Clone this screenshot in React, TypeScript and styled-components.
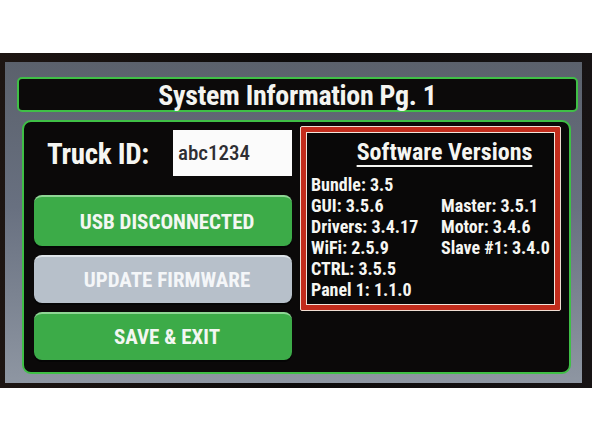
import React from "react";
import styled, { createGlobalStyle } from "styled-components";

const Global = createGlobalStyle`
  html, body { margin: 0; padding: 0; background: #ffffff; }
  body { font-family: "Roboto Condensed", "Roboto", sans-serif; }
`;

const Page = styled.div`
  width: 592px;
  height: 444px;
  padding-top: 53px;
  box-sizing: border-box;
  background: #ffffff;
`;

const Frame = styled.div`
  height: 335px;
  box-sizing: border-box;
  padding: 9px 10px 5px 5px;
  background: linear-gradient(90deg, #1d1512 0%, #0c0a0a 50%, #171314 100%);
  display: flex;
`;

const Bezel = styled.div`
  flex: 1;
  display: flex;
  flex-direction: column;
  padding: 15px 4px 9px 12px;
  background: linear-gradient(180deg, #5b616c 0%, #687080 45%, #8e96a2 100%);
`;

const TitleBar = styled.div`
  height: 35px;
  box-sizing: border-box;
  border: 2px solid #3fbf46;
  border-radius: 5px;
  background: #0c0a0a;
  display: flex;
  align-items: center;
  justify-content: center;
  color: #f4f4f0;
  font-family: "Roboto Condensed", sans-serif;
  font-weight: 700;
  font-size: 28px;
  letter-spacing: -0.3px;
  padding-top: 1px;
`;

const Panel = styled.div`
  margin: 8px 7px 0 5px;
  flex: 1;
  box-sizing: border-box;
  border: 2px solid #3fbf46;
  border-radius: 9px;
  background: #0b0909;
  display: grid;
  grid-template-columns: 258px 261px;
  column-gap: 8px;
  padding: 4px 0 0 10px;
  align-items: start;
`;

const LeftCol = styled.div`
  display: flex;
  flex-direction: column;
  padding-top: 4px;
`;

const IdRow = styled.div`
  display: flex;
  align-items: center;
  height: 46px;
  margin-bottom: 19px;
`;

const IdLabel = styled.div`
  color: #f6f6f2;
  font-family: "Roboto Condensed", sans-serif;
  font-weight: 700;
  font-size: 29px;
  letter-spacing: -0.3px;
  white-space: nowrap;
  margin-left: 13px;
  width: 126px;
  padding-top: 2px;
`;

const IdInput = styled.div`
  width: 119px;
  height: 46px;
  box-sizing: border-box;
  background: #fbfbfb;
  color: #2e2e33;
  display: flex;
  align-items: center;
  padding-left: 5px;
  font-family: "Roboto Condensed", sans-serif;
  font-weight: 500;
  font-size: 21px;
`;

const Button = styled.div<{ $tone: "green" | "gray"; $h: number }>`
  height: ${(p) => p.$h}px;
  box-sizing: border-box;
  border-radius: 8px;
  margin-bottom: 9px;
  background: ${(p) => (p.$tone === "green" ? "#3cab48" : "#b7c0ca")};
  border-top: 2px solid ${(p) => (p.$tone === "green" ? "#8fd695" : "#dfe5ea")};
  box-shadow: 0 2px 0 #050505;
  display: flex;
  align-items: center;
  justify-content: center;
  padding-left: 8px;
  color: ${(p) => (p.$tone === "green" ? "#f3f7f2" : "#f4f6f8")};
  font-family: "Roboto Condensed", sans-serif;
  font-weight: 700;
  font-size: 21px;
`;

const VersionsBox = styled.div`
  height: 185px;
  box-sizing: border-box;
  border: 1px solid #f1ddd2;
  border-radius: 2px;
  background: #c22c1c;
  padding: 5px;
`;

const VersionsInner = styled.div`
  height: 100%;
  box-sizing: border-box;
  border: 1px solid #f3e4da;
  background: #090808;
  padding: 4px 0 0 4px;
  color: #f6f6f2;
  font-family: "Roboto Condensed", sans-serif;
  font-weight: 700;
`;

const VersionsTitle = styled.div`
  text-align: center;
  font-size: 24px;
  line-height: 30px;
  padding-left: 24px;
  margin-bottom: 7px;
  span {
    text-decoration: underline;
    text-underline-offset: 5px;
    text-decoration-thickness: 2px;
  }
`;

const VersionGrid = styled.div`
  display: grid;
  grid-template-columns: 130px auto;
  grid-auto-rows: 21px;
  font-size: 18px;
  align-items: center;
`;

const Item = styled.div`
  white-space: nowrap;
`;

const rows: [string, string][] = [
  ["Bundle: 3.5", ""],
  ["GUI: 3.5.6", "Master: 3.5.1"],
  ["Drivers: 3.4.17", "Motor: 3.4.6"],
  ["WiFi: 2.5.9", "Slave #1: 3.4.0"],
  ["CTRL: 3.5.5", ""],
  ["Panel 1: 1.1.0", ""],
];

export default function App() {
  return (
    <>
      <Global />
      <Page>
        <Frame>
          <Bezel>
            <TitleBar>System Information Pg. 1</TitleBar>
            <Panel>
              <LeftCol>
                <IdRow>
                  <IdLabel>Truck ID:</IdLabel>
                  <IdInput>abc1234</IdInput>
                </IdRow>
                <Button $tone="green" $h={51}>USB DISCONNECTED</Button>
                <Button $tone="gray" $h={48}>UPDATE FIRMWARE</Button>
                <Button $tone="green" $h={48}>SAVE &amp; EXIT</Button>
              </LeftCol>
              <VersionsBox>
                <VersionsInner>
                  <VersionsTitle>
                    <span>Software Versions</span>
                  </VersionsTitle>
                  <VersionGrid>
                    {rows.map(([a, b], i) => (
                      <React.Fragment key={i}>
                        <Item>{a}</Item>
                        <Item>{b}</Item>
                      </React.Fragment>
                    ))}
                  </VersionGrid>
                </VersionsInner>
              </VersionsBox>
            </Panel>
          </Bezel>
        </Frame>
      </Page>
    </>
  );
}
